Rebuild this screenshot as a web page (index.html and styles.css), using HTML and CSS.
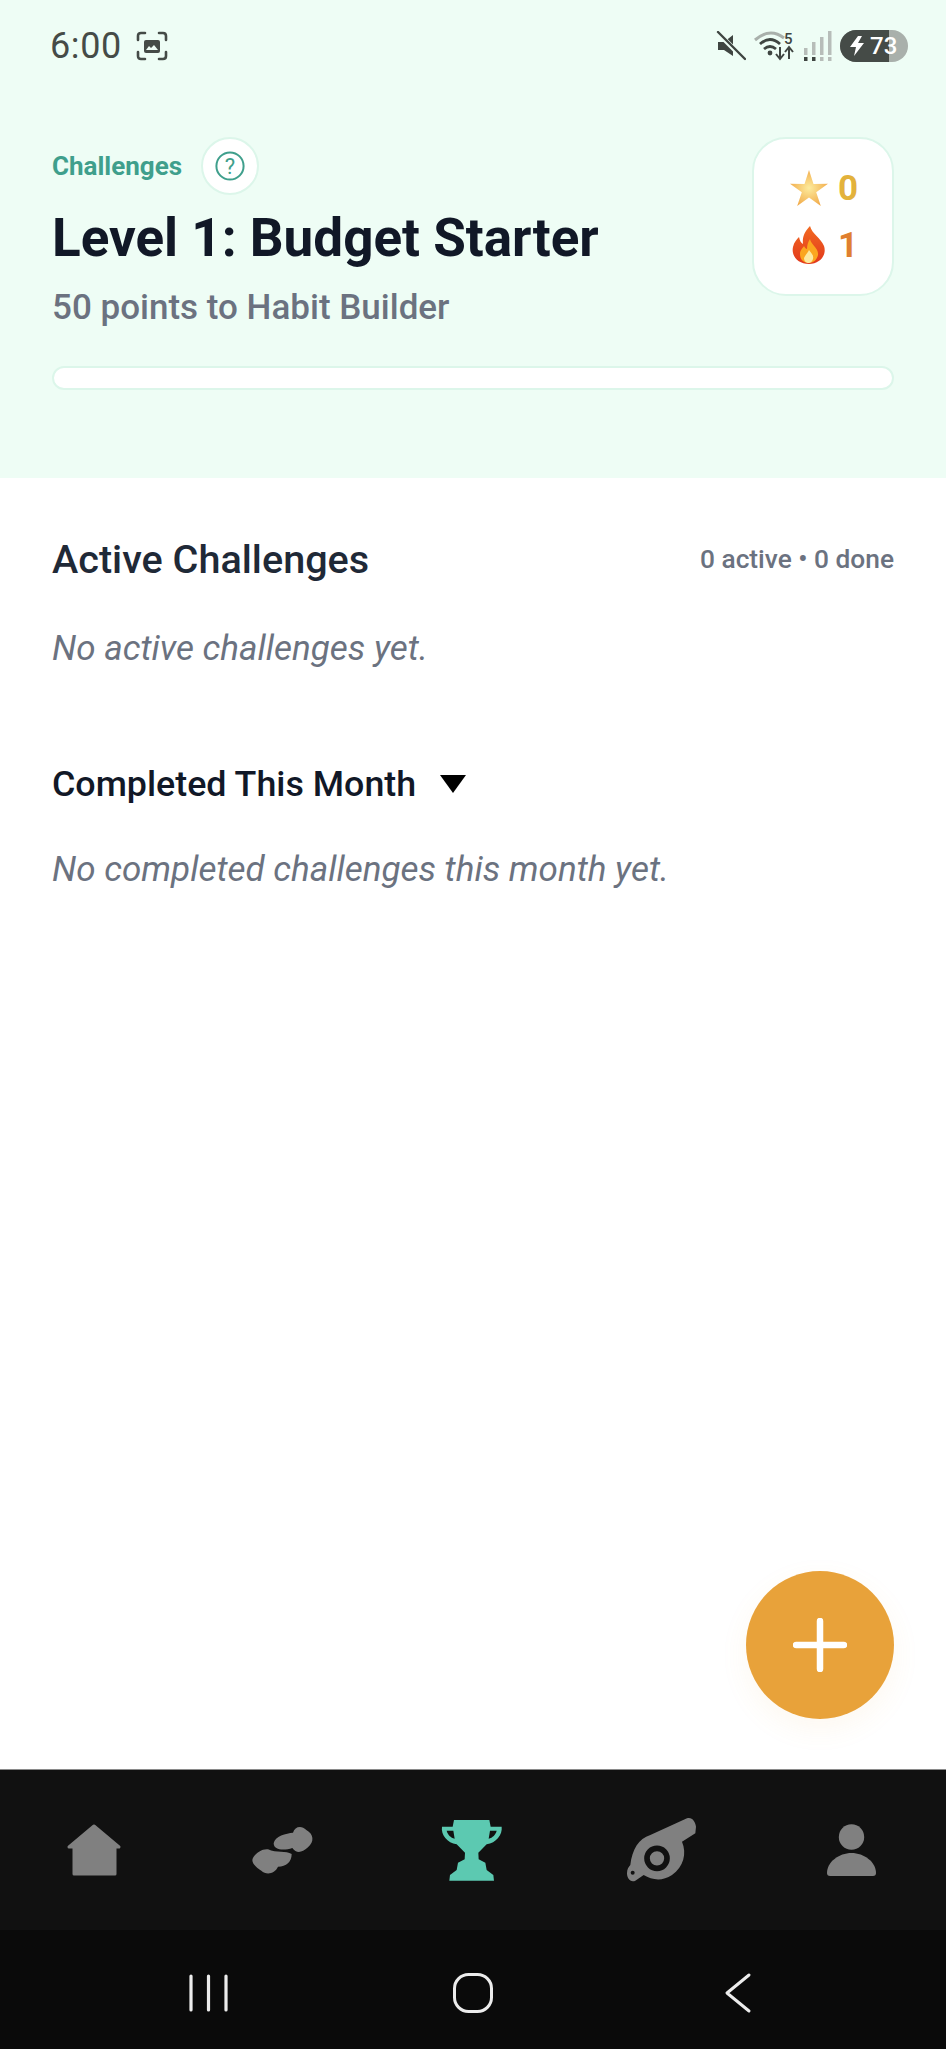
FILE: index.html
```html
<!DOCTYPE html>
<html lang="en">
<head>
<meta charset="utf-8">
<title>Challenges</title>
<link rel="stylesheet" href="styles.css">
</head>
<body>
<div class="app">
  <header class="hero">
    <div class="status">
      <div class="status-left">
        <span class="clock">6:00</span>
        <svg class="shot" viewBox="0 0 32 30" width="32" height="30"><path d="M2 9V5Q2 2 5 2H9M23 2H27Q30 2 30 5V9M30 21V25Q30 28 27 28H23M9 28H5Q2 28 2 25V21" fill="none" stroke="#454b47" stroke-width="2.6" stroke-linecap="round"/><rect x="8" y="9" width="16" height="13" rx="2" fill="#454b47"/><path d="M10 19L13 15L15 17L18 14L22 19Z" fill="#eefdf5"/></svg>
      </div>
      <div class="status-right">
        <svg class="st-mute" viewBox="0 0 30 30" width="30" height="30"><path d="M2 11H8L17 4V25L8 19H2Z" fill="#3f4541"/><path d="M3 3L28 28" stroke="#eefdf5" stroke-width="5"/><path d="M2 1L29 28" stroke="#3f4541" stroke-width="2.4" stroke-linecap="round"/></svg>
        <svg class="st-wifi" viewBox="0 0 42 32" width="42" height="32"><path d="M1 10Q16 -3 30 8" fill="none" stroke="#a9b0ab" stroke-width="3"/><path d="M6 14Q16 5 26 14M10 19Q16 14 22 19" fill="none" stroke="#3f4541" stroke-width="2.8"/><circle cx="16" cy="23" r="2.4" fill="#3f4541"/><path d="M26 17V28M22 24L26 29L30 24M35 29V18M31 22L35 17L39 22" fill="none" stroke="#3f4541" stroke-width="2"/><text x="30" y="14" class="st-five">5</text></svg>
        <svg class="st-signal" viewBox="0 0 28 30" width="28" height="30"><g fill="#b7bdb9"><rect x="0" y="17" width="3.500" height="7"/><rect x="8" y="11" width="3.500" height="13"/><rect x="16" y="6" width="3.500" height="18"/><rect x="24" y="0" width="3.500" height="24"/><rect x="16" y="26" width="3.500" height="4"/><rect x="24" y="26" width="3.500" height="4"/></g><g fill="#3f4541"><rect x="0" y="26" width="3.500" height="4"/><rect x="8" y="26" width="3.500" height="4"/></g></svg>
        <div class="battery">
          <div class="battery-fill"></div>
          <svg class="bolt" viewBox="0 0 14 20" width="14" height="20"><path d="M8 0L0 11H6L4 20L14 7H8L12 0Z" fill="#fff"/></svg>
          <span class="battery-num">73</span>
        </div>
      </div>
    </div>
    <div class="hero-row">
      <div class="hero-text">
        <div class="eyebrow-row">
          <span class="eyebrow">Challenges</span>
          <button class="help"><svg viewBox="0 0 30 30" width="30" height="30"><circle cx="15" cy="15" r="13.600" fill="none" stroke="#3f9f8c" stroke-width="2"/><text x="15" y="22.500" class="help-q">?</text></svg></button>
        </div>
        <h1 class="title">Level 1: Budget Starter</h1>
        <p class="subtitle">50 points to Habit Builder</p>
      </div>
      <div class="stats">
        <div class="stat">
          <svg viewBox="0 0 38 36" width="38" height="36"><defs><radialGradient id="sg" cx="50%" cy="50%" r="60%"><stop offset="0" stop-color="#fdeb9c"/><stop offset="1" stop-color="#f0a341"/></radialGradient></defs><path d="M19 0L23.500 13.900L38 13.800L26.200 22.300L30.800 36L19 27.600L7.200 36L11.800 22.300L0 13.800L14.500 13.900Z" fill="url(#sg)"/></svg>
          <span class="stat-num gold">0</span>
        </div>
        <div class="stat">
          <svg viewBox="-1 0 38 38" width="38" height="38"><defs><linearGradient id="fg" x1="0" y1="0" x2="0" y2="1"><stop offset="0" stop-color="#f26a21"/><stop offset="1" stop-color="#e2381c"/></linearGradient></defs><path d="M19 0C21 8 30 12 33 20C36 29 29 38 18 38C7 38 0 30 2 21C3 16 6 13 8 11C9 15 10 17 12 18C11 11 14 5 19 0Z" fill="url(#fg)"/><path d="M19 13C20 19 28 22 27 29C26 34 22 37 18 37C13 37 9 34 9 28C9 24 12 22 13 20C14 22 15 23 16 23C16 19 17 16 19 13Z" fill="#fba61f"/><path d="M18 24C20 27 23 29 22 33C21 36 19 37 18 37C15 37 13 35 13 32C14 29 17 27 18 24Z" fill="#fde9a0"/></svg>
          <span class="stat-num orange">1</span>
        </div>
      </div>
    </div>
    <div class="progress"></div>
  </header>

  <main class="content">
    <div class="section-head">
      <h2 class="section-title">Active Challenges</h2>
      <span class="section-meta">0 active • 0 done</span>
    </div>
    <p class="empty empty-active">No active challenges yet.</p>
    <div class="completed-head">
      <h3 class="completed-title">Completed This Month</h3>
      <span class="caret"></span>
    </div>
    <p class="empty empty-done">No completed challenges this month yet.</p>
    <button class="fab"><svg viewBox="0 0 54 54" width="54" height="54"><path d="M27 3V51M3 27H51" stroke="#fff" stroke-width="6.500" stroke-linecap="round"/></svg></button>
  </main>

  <nav class="tabs">
    <div class="tab"><svg viewBox="0 0 85 85" width="85" height="85"><path d="M42 16L67 37H63V64H22V37H17Z" fill="#808080" stroke="#808080" stroke-width="3" stroke-linejoin="round"/></svg></div>
    <div class="tab"><svg viewBox="0 0 85 85" width="85" height="85"><g transform="translate(-241.300 -50) scale(.3333)" fill="#808080"><path d="M822 250C825 228 860 220 880 218C885 200 905 195 920 210C942 222 945 245 925 262C905 280 890 280 878 264C855 272 822 272 822 250Z"/><path d="M758 300C760 285 785 265 805 268C830 280 860 272 876 282C876 305 860 320 835 320C825 342 800 346 785 332C770 322 758 312 758 300Z"/></g></svg></div>
    <div class="tab"><svg viewBox="0 0 255 255" width="85" height="85"><path d="M72 30H178L182 50H215C218 75 198 98 170 103L145 128L146 148L166 158L170 180L190 195L192 212H58L60 195L80 180L84 158L104 148L105 128L80 103C52 98 32 75 36 50H68Z" fill="#5cc9b1"/><path d="M50 62H70L74 86C62 83 53 74 50 62ZM200 62H180L176 86C188 83 197 74 200 62Z" fill="#111"/></svg></div>
    <div class="tab"><svg viewBox="5 0 270 255" width="90" height="85"><path d="M45 165C50 120 70 85 105 75L215 25C230 20 240 35 242 50L240 70L200 95C215 130 205 170 170 195C140 215 110 210 85 195L60 212C45 218 35 205 35 190C35 178 40 170 45 165Z" fill="#808080"/><circle cx="125" cy="145" r="30" fill="none" stroke="#111" stroke-width="17"/><circle cx="52" cy="188" r="6" fill="#111"/></svg></div>
    <div class="tab"><svg viewBox="0 0 85 85" width="85" height="85"><circle cx="42.500" cy="27" r="12.700" fill="#808080"/><path d="M18 63C18 52 30 43 42.500 43C55 43 67 52 67 63Q67 66 64 66H21Q18 66 18 63Z" fill="#808080"/></svg></div>
  </nav>

  <div class="sysnav">
    <svg viewBox="0 0 39 38" width="39" height="38"><path d="M2 2V36M19.500 2V36M37 2V36" stroke="#ececec" stroke-width="3.200" stroke-linecap="round"/></svg>
    <svg viewBox="0 0 42 42" width="42" height="42"><rect x="2.500" y="2.500" width="37" height="37" rx="14" fill="none" stroke="#ececec" stroke-width="3"/></svg>
    <svg viewBox="0 0 28 42" width="28" height="42"><path d="M25 3L3 21L25 39" fill="none" stroke="#ececec" stroke-width="3" stroke-linecap="round" stroke-linejoin="round"/></svg>
  </div>
</div>
</body>
</html>
```

FILE: styles.css
```css
* { box-sizing: border-box; }
html, body { margin: 0; padding: 0; }
body { font-family: Roboto, "Noto Sans", sans-serif; background: #fff; }
.app { width: 946px; height: 2049px; display: flex; flex-direction: column; overflow: hidden; }

.hero { height: 478px; background: #eefdf5; padding: 0 52px; flex: none; }
.status { height: 92px; margin: 0 -14px 0 -2px; display: flex; align-items: center; justify-content: space-between; }
.status-left { display: flex; align-items: center; gap: 14px; }
.clock { font-size: 36px; color: #454b47; letter-spacing: .6px; }
.status-right { display: flex; align-items: center; gap: 8px; }
.st-five { font: 500 15px Roboto, sans-serif; fill: #3f4541; }
.battery { position: relative; width: 68px; height: 32px; border-radius: 16px; background: #a9b0ab; overflow: hidden; display: flex; align-items: center; padding-left: 10px; gap: 6px; }
.battery-fill { position: absolute; left: 0; top: 0; bottom: 0; width: 49px; background: #454b47; }
.bolt { position: relative; }
.battery-num { position: relative; font-size: 24px; font-weight: 500; color: #fff; }

.hero-row { margin-top: 45px; display: flex; justify-content: space-between; align-items: flex-start; }
.eyebrow-row { display: flex; align-items: center; gap: 19px; height: 58px; }
.eyebrow { font-size: 26px; font-weight: 700; color: #3f9f8c; }
.help { flex: none; width: 58px; height: 58px; padding: 0; border-radius: 50%; border: 2px solid #dcf6ea; background: #fff; display: flex; align-items: center; justify-content: center; }
.help-q { font: 400 22px Roboto, sans-serif; fill: #3f9f8c; text-anchor: middle; }
.title { margin: 12px 0 0; font-size: 53px; line-height: 62px; font-weight: 700; color: #111827; }
.subtitle { margin: 17px 0 0; font-size: 35px; line-height: 44px; font-weight: 500; color: #6b7280; }
.stats { width: 142px; height: 159px; background: #fff; border: 2px solid #dcf6ea; border-radius: 34px; display: flex; flex-direction: column; align-items: center; justify-content: center; gap: 20px; }
.stat { display: flex; align-items: center; gap: 10px; height: 37px; width: 70px; padding-left: 2px; flex: none; }
.stat svg { flex: none; }
.stat-num { font-size: 35px; font-weight: 700; line-height: 37px; }
.gold { color: #e3b23c; }
.orange { color: #e07f2f; }
.progress { margin-top: 36px; height: 24px; background: #fff; border: 2px solid #dcf6ea; border-radius: 12px; }

.content { position: relative; flex: 1; padding: 57px 52px 0; background: #fff; }
.section-head { display: flex; align-items: center; justify-content: space-between; height: 48px; }
.section-title { margin: 0; font-size: 39.600px; font-weight: 500; color: #1f2937; }
.section-meta { font-size: 26.300px; font-weight: 500; color: #6b7280; }
.empty { margin: 0; font-size: 35px; font-style: italic; line-height: 44px; color: #6b7280; }
.empty-active { margin-top: 44px; }
.completed-head { margin-top: 89px; display: flex; align-items: center; gap: 24px; height: 48px; }
.completed-title { margin: 0; font-size: 35.800px; font-weight: 500; color: #111827; }
.caret { width: 0; height: 0; border-left: 13px solid transparent; border-right: 13px solid transparent; border-top: 18px solid #000; }
.empty-done { margin-top: 40px; }
.fab { position: absolute; right: 52px; top: 1093px; width: 148px; height: 148px; padding: 0; border: 0; border-radius: 50%; background: #e8a23a; display: flex; align-items: center; justify-content: center; box-shadow: 0 10px 28px rgba(232,162,58,.08); }

.tabs { flex: none; height: 161px; padding-top: 40px; background: #111; border-top: 1px solid #8a8a8a; display: grid; grid-template-columns: repeat(5, 1fr); }
.tab { display: flex; justify-content: center; height: 85px; }
.sysnav { flex: none; height: 119px; padding: 7px 76px 0; background: #0a0a0a; display: grid; grid-template-columns: repeat(3, 1fr); justify-items: center; align-items: center; }
```
